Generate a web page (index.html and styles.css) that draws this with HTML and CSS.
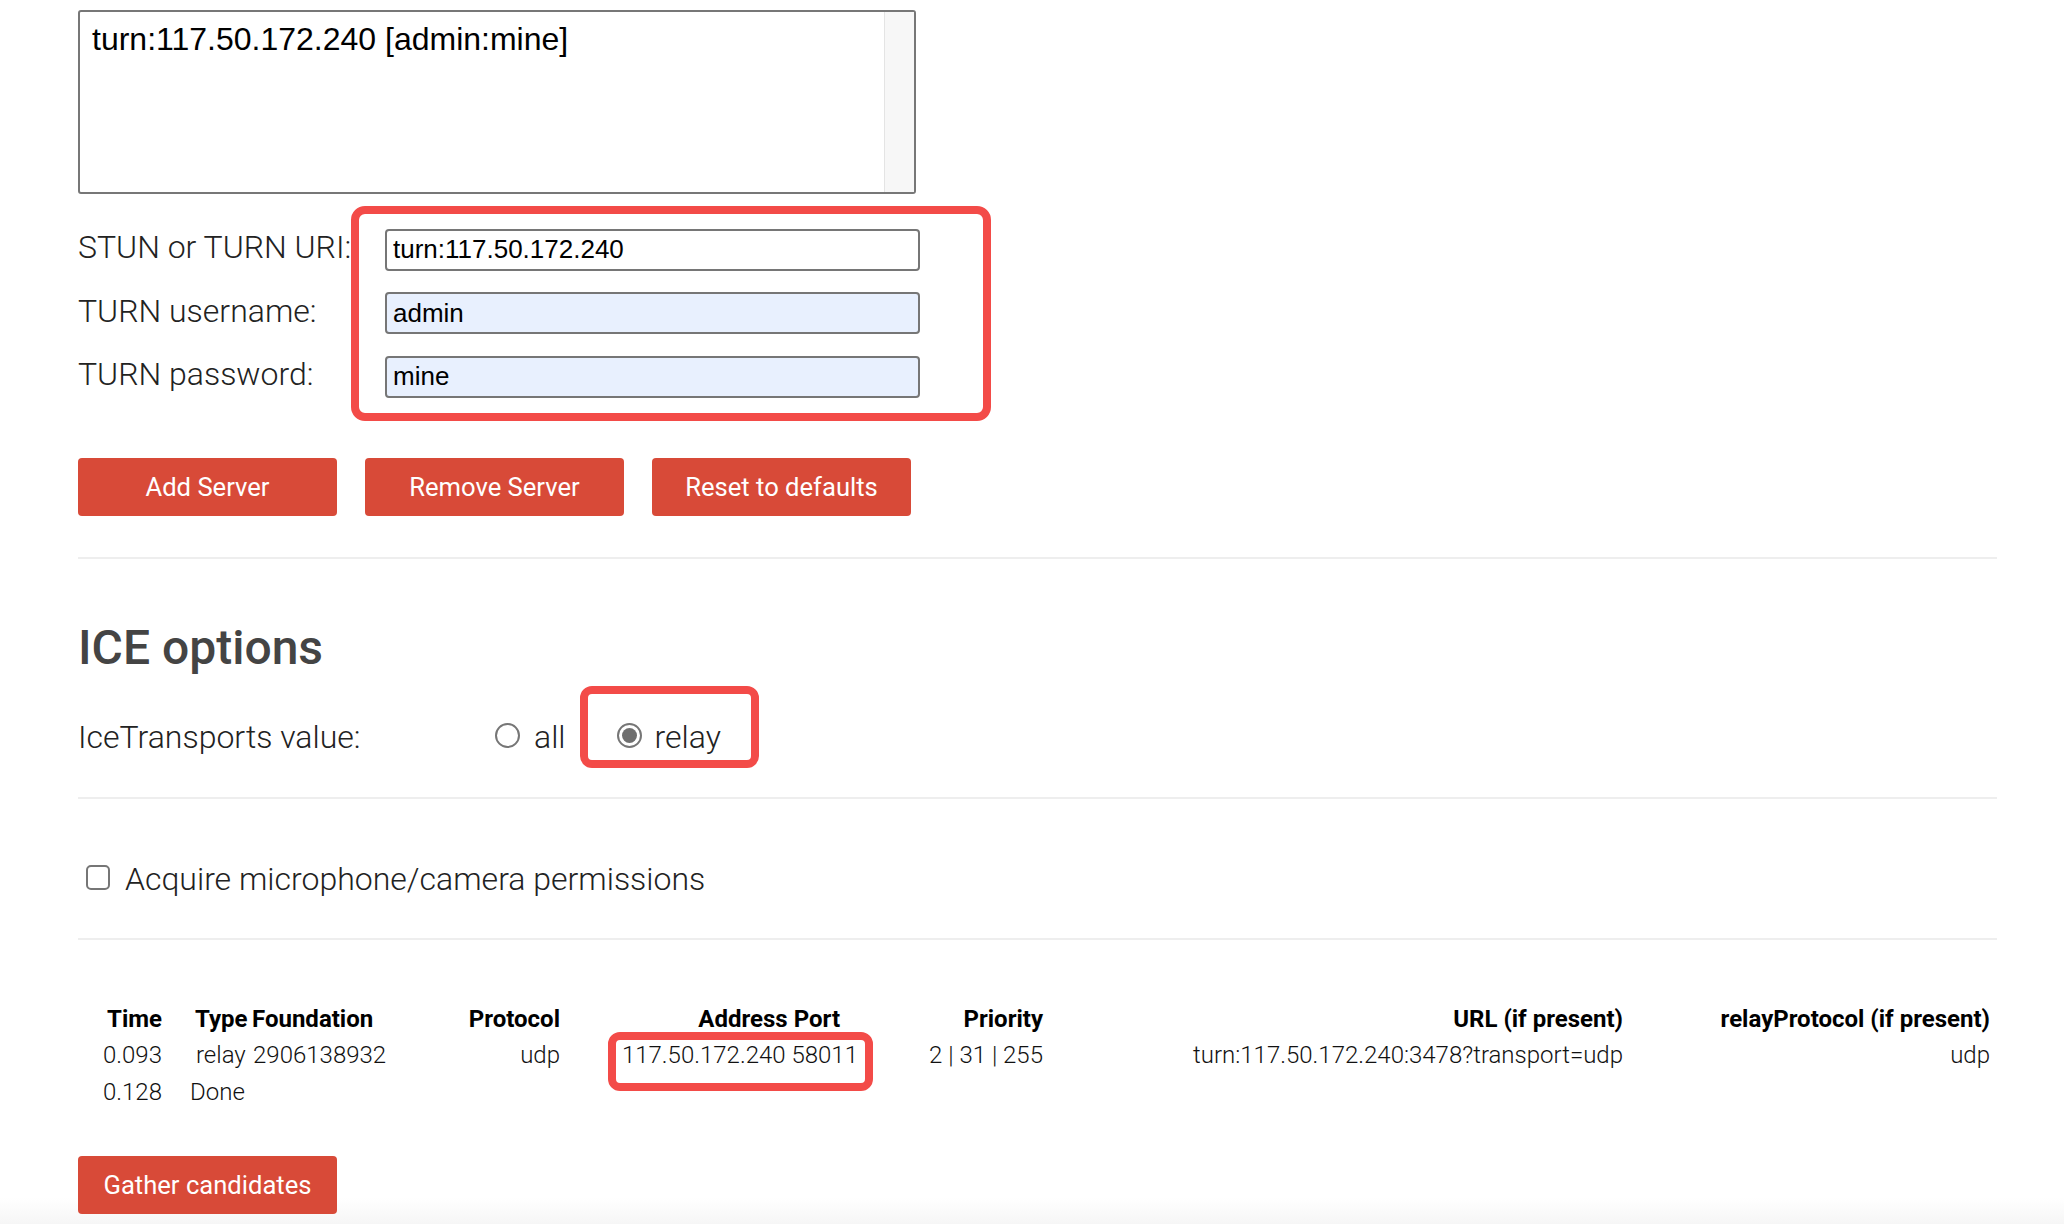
FILE: index.html
```html
<!DOCTYPE html>
<html>
	<head>
		<meta charset="UTF-8">
		<title>Trickle ICE</title>
		<link rel="stylesheet" href="styles.css">
	</head>
	<body>
        <div class="page">
            <!-- 服务器列表 -->
            <section class="servers">
                <div class="listbox">
                    <div class="option">turn:117.50.172.240 [admin:mine]</div>
                    <div class="track"></div>
                </div>
                <div class="fields">
                    <div class="field"><label>STUN or TURN URI:</label><input type="text" value="turn:117.50.172.240"></div>
                    <div class="field"><label>TURN username:</label><input type="text" class="filled" value="admin"></div>
                    <div class="field"><label>TURN password:</label><input type="text" class="filled" value="mine"></div>
                    <div class="mark mark-fields"></div>
                </div>
                <div class="buttons">
                    <button class="btn">Add Server</button>
                    <button class="btn">Remove Server</button>
                    <button class="btn">Reset to defaults</button>
                </div>
            </section>

            <div class="rule"></div>

            <!-- ICE 选项 -->
            <section class="ice">
                <h2>ICE options</h2>
                <div class="transports">
                    <span class="label">IceTransports value:</span>
                    <span class="radio"></span><span class="choice">all</span>
                    <span class="radio checked second"></span><span class="choice">relay</span>
                    <div class="mark mark-relay"></div>
                </div>
            </section>

            <div class="rule rule2"></div>

            <section class="perm">
                <span class="checkbox"></span><span>Acquire microphone/camera permissions</span>
            </section>

            <div class="rule rule3"></div>

            <!-- 候选结果 -->
            <section class="results">
                <div class="candidates">
                    <div class="th r">Time</div>
                    <div class="th type">Type</div>
                    <div class="th found">Foundation</div>
                    <div class="th r">Protocol</div>
                    <div class="th r addr-head">Address Port</div>
                    <div class="th r">Priority</div>
                    <div class="th r">URL (if present)</div>
                    <div class="th r">relayProtocol (if present)</div>

                    <div class="td r">0.093</div>
                    <div class="td type-val">relay</div>
                    <div class="td found-val">2906138932</div>
                    <div class="td r">udp</div>
                    <div class="td r">117.50.172.240 58011</div>
                    <div class="td r">2 | 31 | 255</div>
                    <div class="td r">turn:117.50.172.240:3478?transport=udp</div>
                    <div class="td r">udp</div>

                    <div class="td r">0.128</div>
                    <div class="td done">Done</div>

                    <div class="mark mark-addr"></div>
                </div>
                <button class="btn gather">Gather candidates</button>
            </section>
        </div>
	</body>
</html>
```

FILE: styles.css
```css
*{
    margin: 0;
    padding: 0;
    box-sizing: border-box;
}
html{
    background: linear-gradient(to bottom, #fff 1198px, #f6f6f6 1224px);
    min-height: 1224px;
}
body{
    font-family: Roboto, "Liberation Sans", sans-serif;
    font-weight: 300;
    font-size: 32px;
    color: #222;
}
.page{
    width: 1919px;
    margin-left: 78px;
    padding-top: 10px;
}

/* 服务器列表 */
.listbox{
    width: 838px;
    height: 184px;
    border: 2px solid #777;
    border-radius: 3px;
    display: flex;
    font-family: "Liberation Sans", Arial, sans-serif;
    font-weight: 400;
    font-size: 32px;
    color: #000;
}
.listbox .option{
    flex: 1;
    padding: 9px 12px;
}
.listbox .track{
    width: 30px;
    background: #f7f7f7;
    border-left: 1px solid #e4e4e4;
}
.fields{
    position: relative;
    margin-top: 34px;
    display: flex;
    flex-direction: column;
    gap: 21px;
}
.field{
    display: flex;
    align-items: baseline;
}
.field label{
    width: 307px;
}
.field input{
    width: 535px;
    height: 42px;
    border: 2px solid #767676;
    border-radius: 4px;
    padding: 0 6px;
    font-family: "Liberation Sans", Arial, sans-serif;
    font-size: 26px;
    color: #000;
    background: #fff;
    outline: none;
}
.field input.filled{
    background: #e8f0fe;
}
.buttons{
    display: flex;
    gap: 28px;
    margin-top: 60px;
}
.btn{
    width: 259px;
    height: 58px;
    border: none;
    border-radius: 4px;
    background: #d84a38;
    color: #fff;
    font-family: Roboto, "Liberation Sans", sans-serif;
    font-weight: 400;
    font-size: 25.6px;
}
.rule{
    height: 2px;
    background: #eee;
    margin-top: 41px;
}

/* 红色标注框 */
.mark{
    position: absolute;
    border: 8px solid #f34b48;
    border-radius: 14px;
}
.mark-fields{
    left: 273px;
    top: -22px;
    width: 640px;
    height: 215px;
}
.mark-relay{
    left: 502px;
    top: -32px;
    width: 179px;
    height: 82px;
    border-radius: 12px;
}
.mark-addr{
    left: 530px;
    top: 31px;
    width: 265px;
    height: 59px;
    border-radius: 12px;
}

/* ICE 选项 */
.ice h2{
    margin-top: 60px;
    font-size: 48px;
    font-weight: 500;
    color: #444;
}
.transports{
    position: relative;
    display: flex;
    align-items: baseline;
    margin-top: 42px;
}
.transports .label{
    width: 417px;
}
.radio{
    width: 25px;
    height: 25px;
    border: 2px solid #767676;
    border-radius: 50%;
    margin-right: 14px;
    background: #fff;
    position: relative;
}
.radio.second{
    margin-left: 51px;
    margin-right: 13px;
}
.radio.checked::after{
    content: "";
    position: absolute;
    left: 3px;
    top: 3px;
    width: 15px;
    height: 15px;
    border-radius: 50%;
    background: #6f6f6f;
}
.rule2{
    margin-top: 41px;
}
.perm{
    display: flex;
    align-items: baseline;
    margin-top: 61px;
}
.checkbox{
    width: 24px;
    height: 25px;
    border: 2px solid #767676;
    border-radius: 5px;
    margin-left: 8px;
    margin-right: 15px;
}
.rule3{
    margin-top: 40px;
}

/* 候选表格 */
.candidates{
    position: relative;
    display: grid;
    grid-template-columns: 84px 88px 135px 175px 298px 185px 580px 367px;
    margin-top: 61px;
    font-size: 24px;
    line-height: 36.5px;
    color: #111;
}
.th{
    font-weight: 700;
    color: #000;
}
.r{
    text-align: right;
}
.type{
    padding-left: 33px;
}
.found{
    padding-left: 2px;
}
.addr-head{
    padding-right: 18px;
}
.type-val{
    padding-left: 34px;
}
.found-val{
    padding-left: 3px;
}
.done{
    grid-column: 2 / 9;
    padding-left: 28px;
}
.gather{
    display: block;
    margin-top: 46px;
}
```
